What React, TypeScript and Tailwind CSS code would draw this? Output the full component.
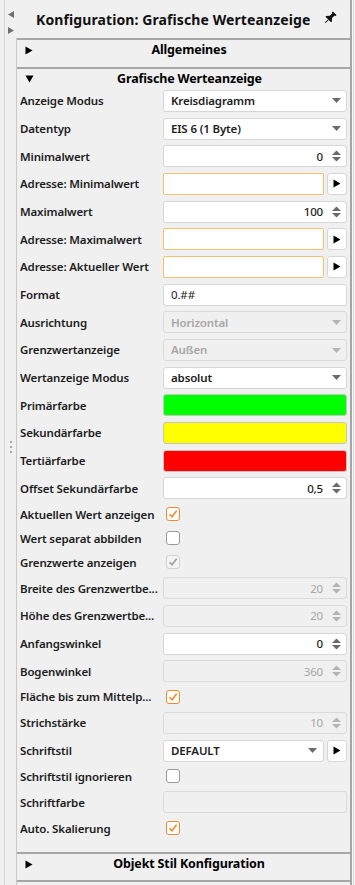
import React from 'react';

type Row = {
  label: string;
  kind: 'select' | 'spin' | 'addr' | 'text' | 'color' | 'check' | 'selectBtn' | 'empty';
  value?: string;
  disabled?: boolean;
  checked?: boolean;
};

const rows: Row[] = [
  { label: 'Anzeige Modus', kind: 'select', value: 'Kreisdiagramm' },
  { label: 'Datentyp', kind: 'select', value: 'EIS 6 (1 Byte)' },
  { label: 'Minimalwert', kind: 'spin', value: '0' },
  { label: 'Adresse: Minimalwert', kind: 'addr' },
  { label: 'Maximalwert', kind: 'spin', value: '100' },
  { label: 'Adresse: Maximalwert', kind: 'addr' },
  { label: 'Adresse: Aktueller Wert', kind: 'addr' },
  { label: 'Format', kind: 'text', value: '0.##' },
  { label: 'Ausrichtung', kind: 'select', value: 'Horizontal', disabled: true },
  { label: 'Grenzwertanzeige', kind: 'select', value: 'Außen', disabled: true },
  { label: 'Wertanzeige Modus', kind: 'select', value: 'absolut' },
  { label: 'Primärfarbe', kind: 'color', value: '#00ff00' },
  { label: 'Sekundärfarbe', kind: 'color', value: '#ffff00' },
  { label: 'Tertiärfarbe', kind: 'color', value: '#ff0000' },
  { label: 'Offset Sekundärfarbe', kind: 'spin', value: '0,5' },
  { label: 'Aktuellen Wert anzeigen', kind: 'check', checked: true },
  { label: 'Wert separat abbilden', kind: 'check' },
  { label: 'Grenzwerte anzeigen', kind: 'check', checked: true, disabled: true },
  { label: 'Breite des Grenzwertbe...', kind: 'spin', value: '20', disabled: true },
  { label: 'Höhe des Grenzwertbe...', kind: 'spin', value: '20', disabled: true },
  { label: 'Anfangswinkel', kind: 'spin', value: '0' },
  { label: 'Bogenwinkel', kind: 'spin', value: '360', disabled: true },
  { label: 'Fläche bis zum Mittelp...', kind: 'check', checked: true },
  { label: 'Strichstärke', kind: 'spin', value: '10', disabled: true },
  { label: 'Schriftstil', kind: 'selectBtn', value: 'DEFAULT' },
  { label: 'Schriftstil ignorieren', kind: 'check' },
  { label: 'Schriftfarbe', kind: 'empty' },
  { label: 'Auto. Skalierung', kind: 'check', checked: true },
];

function TriRight({ className = '' }: { className?: string }) {
  return (
    <svg width="8" height="9" viewBox="0 0 8 9" className={className}>
      <path d="M0.5 0.5L7.5 4.5L0.5 8.5Z" fill="currentColor" />
    </svg>
  );
}

function TriDown({ color = '#6b6b6b' }: { color?: string }) {
  return (
    <svg width="9" height="5" viewBox="0 0 9 5">
      <path d="M0 0H9L4.5 5Z" fill={color} />
    </svg>
  );
}

function Spinner({ disabled }: { disabled?: boolean }) {
  const c = disabled ? '#b4b4b4' : '#6b6b6b';
  return (
    <svg width="9" height="12" viewBox="0 0 9 12">
      <path d="M0 5H9L4.5 0.5Z" fill={c} />
      <path d="M0 7H9L4.5 11.5Z" fill={c} />
    </svg>
  );
}

function ArrowButton() {
  return (
    <div className="w-[20px] h-[22px] ml-[3px] bg-white border border-[#d6d6d6] rounded-[3px] flex items-center justify-center text-black">
      <TriRight />
    </div>
  );
}

function Check({ checked, disabled }: { checked?: boolean; disabled?: boolean }) {
  const border = disabled ? 'border-[#d2d2d2] bg-[#f4f4f4]' : checked ? 'border-[#f08a2c] bg-white' : 'border-[#9a9a9a] bg-white';
  return (
    <div className={`w-[14px] h-[14px] ml-[3px] border rounded-[3px] flex items-center justify-center ${border}`}>
      {checked && (
        <svg width="10" height="10" viewBox="0 0 10 10">
          <path d="M1.5 5.2L4 7.8L8.6 1.8" fill="none" stroke={disabled ? '#9c9c9c' : '#f08a2c'} strokeWidth="1.6" />
        </svg>
      )}
    </div>
  );
}

function Control({ row }: { row: Row }) {
  const box = row.disabled ? 'bg-[#f0f0f0] border-[#dadada] text-[#a6a6a6]' : 'bg-white border-[#d6d6d6] text-[#1c1c1c]';
  switch (row.kind) {
    case 'select':
      return (
        <div className={`flex-1 h-[22px] border rounded-[3px] flex items-center pl-[7px] pr-[5px] ${box}`}>
          <span className="flex-1 font-semibold">{row.value}</span>
          <TriDown color={row.disabled ? '#b4b4b4' : '#6b6b6b'} />
        </div>
      );
    case 'spin':
      return (
        <div className={`flex-1 h-[22px] border rounded-[3px] flex items-center pr-[5px] ${box}`}>
          <span className={`flex-1 text-right pr-[9px] ${row.disabled ? '' : 'font-medium'}`}>{row.value}</span>
          <Spinner disabled={row.disabled} />
        </div>
      );
    case 'addr':
      return (
        <div className="flex-1 flex items-center">
          <div className="flex-1 h-[22px] bg-white border-[1.5px] border-[#f6c16c] rounded-[2px]" />
          <ArrowButton />
        </div>
      );
    case 'text':
      return (
        <div className={`flex-1 h-[22px] border rounded-[3px] flex items-center pl-[7px] ${box}`}>
          <span>{row.value}</span>
        </div>
      );
    case 'color':
      return (
        <div className="flex-1 h-[22px] border border-[#c4c4c4] rounded-[3px]" style={{ backgroundColor: row.value }} />
      );
    case 'selectBtn':
      return (
        <div className="flex-1 flex items-center">
          <div className={`flex-1 h-[22px] border rounded-[3px] flex items-center pl-[7px] pr-[6px] ${box}`}>
            <span className="flex-1 font-semibold">{row.value}</span>
            <TriDown />
          </div>
          <ArrowButton />
        </div>
      );
    case 'empty':
      return <div className="flex-1 h-[22px] bg-[#f0f0f0] border border-[#dadada] rounded-[3px]" />;
    case 'check':
      return (
        <div className="flex-1 flex items-center">
          <Check checked={row.checked} disabled={row.disabled} />
        </div>
      );
  }
}

function SectionHeader({ title, open }: { title: string; open?: boolean }) {
  return (
    <div className="h-[18px] pt-[2px] flex items-center pl-[8px] pr-[1px] text-black">
      {open ? (
        <svg width="9" height="8" viewBox="0 0 9 8" className="shrink-0">
          <path d="M0.5 0.5H8.5L4.5 7.5Z" fill="currentColor" />
        </svg>
      ) : (
        <TriRight className="shrink-0" />
      )}
      <span className="flex-1 text-center font-bold text-[12.5px] pr-[4px]">{title}</span>
    </div>
  );
}

export default function App() {
  return (
    <div
      className="w-[355px] h-[885px] bg-[#f0f0f0] flex overflow-hidden text-[11.5px] tracking-[-0.15px] text-[#1c1c1c]"
      style={{ fontFamily: '"Noto Sans", "Open Sans", sans-serif' }}
    >
      {/* side strip */}
      <div className="w-[16px] pl-[4px] flex shrink-0">
        <div className="flex-1 border-l border-[#d6d6d6] flex flex-col items-center">
          <div className="mt-[11px] text-[#6e6e6e]">
            <svg width="6" height="7" viewBox="0 0 6 7">
              <path d="M6 0V7L0 3.5Z" fill="currentColor" />
            </svg>
          </div>
          <div className="mt-[9px] text-[#6e6e6e]">
            <svg width="6" height="7" viewBox="0 0 6 7">
              <path d="M0 0V7L6 3.5Z" fill="currentColor" />
            </svg>
          </div>
          <div className="mt-[407px] flex flex-col gap-[3px] items-center">
            <div className="w-[2px] h-[2px] bg-[#a8a8a8]" />
            <div className="w-[2px] h-[2px] bg-[#a8a8a8]" />
            <div className="w-[2px] h-[2px] bg-[#a8a8a8]" />
          </div>
        </div>
      </div>

      {/* main panel */}
      <div className="w-[334px] shrink-0 flex flex-col">
        <div className="h-[38px] flex items-center pl-[20px] pr-[13px]">
          <span className="font-bold text-[14px] text-[#111] tracking-[0.1px]">Konfiguration: Grafische Werteanzeige</span>
          <svg width="14" height="14" viewBox="0 0 12 12" className="ml-auto mt-[-2px]">
            <g transform="rotate(45 6 6)">
              <path d="M3.8 0.3h4.4v1.4h-0.9v3.1l2 2.2v1H2.5v-1l2-2.2V1.7h-0.7z" fill="#111" />
              <path d="M5.6 7.8h0.8v3.9h-0.8z" fill="#111" />
            </g>
          </svg>
        </div>

        <div className="flex-1 border-l border-[#c9c9c9] flex flex-col">
          <div className="border-t-2 border-[#a6a6a6] h-[29px]">
            <SectionHeader title="Allgemeines" />
          </div>
          <div className="border-t-2 border-[#a6a6a6] pb-[12px]">
            <SectionHeader title="Grafische Werteanzeige" open />
            <div className="flex flex-col">
              {rows.map((row) => (
                <div
                  key={row.label}
                  className={`flex items-center pl-[3px] pr-[3px] ${row.kind === 'check' ? 'h-[24px]' : 'h-[27.7px]'}`}
                >
                  <span className="w-[143px] shrink-0 font-semibold whitespace-nowrap overflow-hidden">{row.label}</span>
                  <Control row={row} />
                </div>
              ))}
            </div>
          </div>
          <div className="border-t-2 border-[#a6a6a6] h-[30px] border-b-2">
            <SectionHeader title="Objekt Stil Konfiguration" />
          </div>
        </div>
      </div>

      {/* right edge */}
      <div className="w-[2px] shrink-0 bg-[#a6a6a6]" />
      <div className="w-[3px] shrink-0 flex">
        <div className="w-[1px] bg-[#fafafa]" />
        <div className="w-[1px] bg-[#d9d9d9]" />
      </div>
    </div>
  );
}
